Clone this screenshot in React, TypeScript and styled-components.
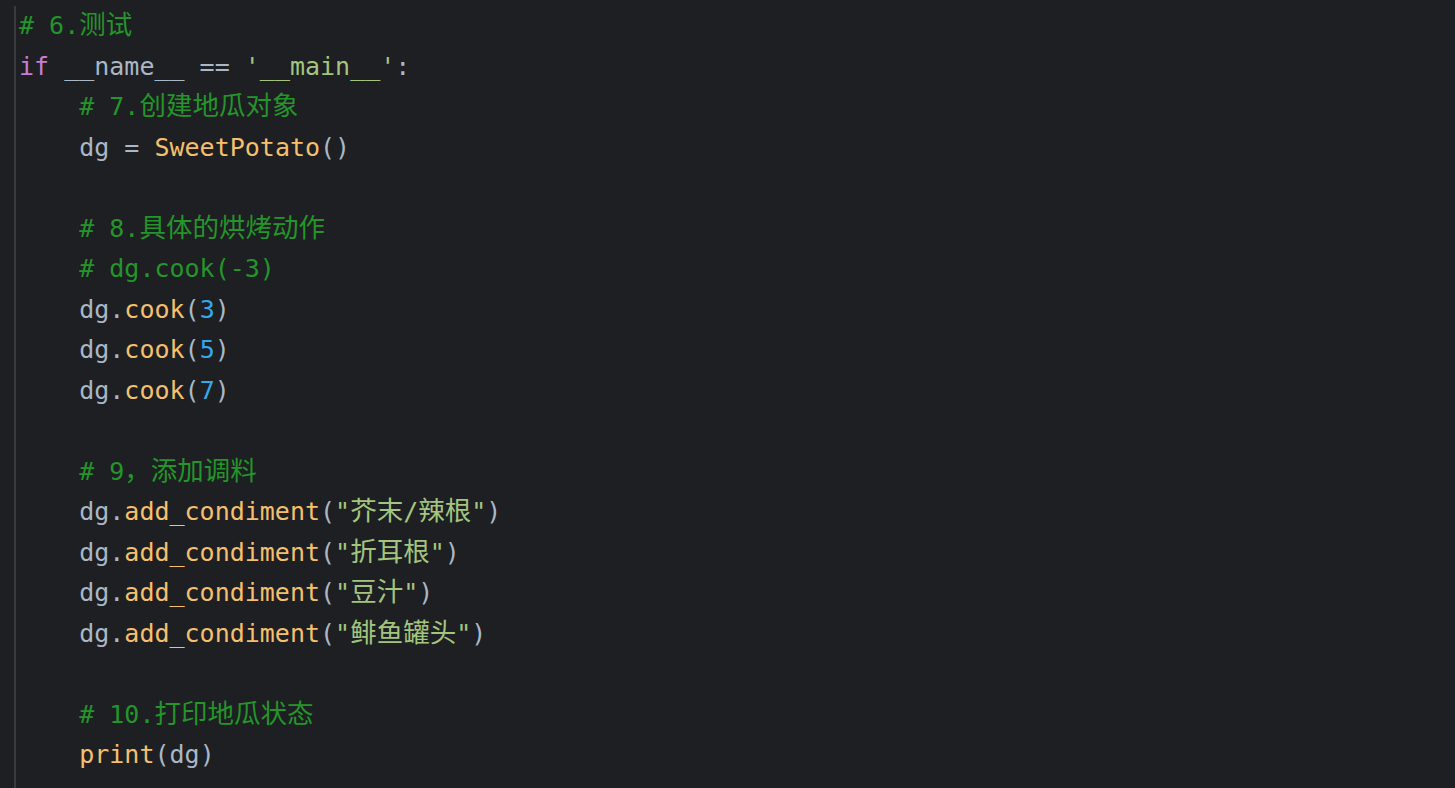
import React from "react";
import styled, { createGlobalStyle } from "styled-components";

const Global = createGlobalStyle`
  html, body { margin: 0; padding: 0; background: #1e1f22; }
  body { width: 1455px; height: 788px; overflow: hidden; }
`;

const Editor = styled.div`
  width: 1455px;
  height: 788px;
  background: #1e1f22;
  box-sizing: border-box;
  padding: 6px 0 0 14px;
  display: flex;
`;

const Gutter = styled.div`
  flex: 1;
  border-left: 2px solid #393b40;
  padding-left: 3px;
  display: flex;
  flex-direction: column;
`;

const Line = styled.div`
  flex: none;
  height: 40.5px;
  line-height: 40.5px;
  white-space: pre;
  font-family: "DejaVu Sans Mono", "Noto Sans CJK SC", monospace;
  font-size: 25px;
  color: #a9b7c6;
`;

type Kind = "cm" | "kw" | "id" | "fn" | "num" | "str" | "op";

const colors: Record<Kind, string> = {
  cm: "#24952a",
  kw: "#c77dd8",
  id: "#a9b7c6",
  fn: "#f5c06e",
  num: "#33a9ec",
  str: "#a3c57f",
  op: "#a9b7c6",
};

const Tok = styled.span<{ $k: Kind }>`
  color: ${(p) => colors[p.$k]};
`;

const Cjk = styled.span`
  font-family: "Noto Sans CJK SC", sans-serif;
  font-size: 26.5px;
  line-height: 1;
`;

type T = [Kind, string];

const lines: T[][] = [
  [["cm", "# 6.测试"]],
  [["kw", "if"], ["id", " __name__ == "], ["str", "'__main__'"], ["op", ":"]],
  [["cm", "    # 7.创建地瓜对象"]],
  [["id", "    dg = "], ["fn", "SweetPotato"], ["op", "()"]],
  [],
  [["cm", "    # 8.具体的烘烤动作"]],
  [["cm", "    # dg.cook(-3)"]],
  [["id", "    dg."], ["fn", "cook"], ["op", "("], ["num", "3"], ["op", ")"]],
  [["id", "    dg."], ["fn", "cook"], ["op", "("], ["num", "5"], ["op", ")"]],
  [["id", "    dg."], ["fn", "cook"], ["op", "("], ["num", "7"], ["op", ")"]],
  [],
  [["cm", "    # 9，添加调料"]],
  [["id", "    dg."], ["fn", "add_condiment"], ["op", "("], ["str", '"芥末/辣根"'], ["op", ")"]],
  [["id", "    dg."], ["fn", "add_condiment"], ["op", "("], ["str", '"折耳根"'], ["op", ")"]],
  [["id", "    dg."], ["fn", "add_condiment"], ["op", "("], ["str", '"豆汁"'], ["op", ")"]],
  [["id", "    dg."], ["fn", "add_condiment"], ["op", "("], ["str", '"鲱鱼罐头"'], ["op", ")"]],
  [],
  [["cm", "    # 10.打印地瓜状态"]],
  [["fn", "    print"], ["op", "("], ["id", "dg"], ["op", ")"]],
];

function renderText(s: string) {
  const parts = s.split(/([\u3000-\u9fff\uff00-\uffef]+)/);
  return parts.map((p, i) =>
    /[\u3000-\u9fff\uff00-\uffef]/.test(p) ? <Cjk key={i}>{p}</Cjk> : p
  );
}

export default function App() {
  return (
    <>
      <Global />
      <Editor>
        <Gutter>
          {lines.map((ln, i) => (
            <Line key={i}>
              {ln.map(([k, s], j) => (
                <Tok key={j} $k={k}>
                  {renderText(s)}
                </Tok>
              ))}
            </Line>
          ))}
        </Gutter>
      </Editor>
    </>
  );
}
